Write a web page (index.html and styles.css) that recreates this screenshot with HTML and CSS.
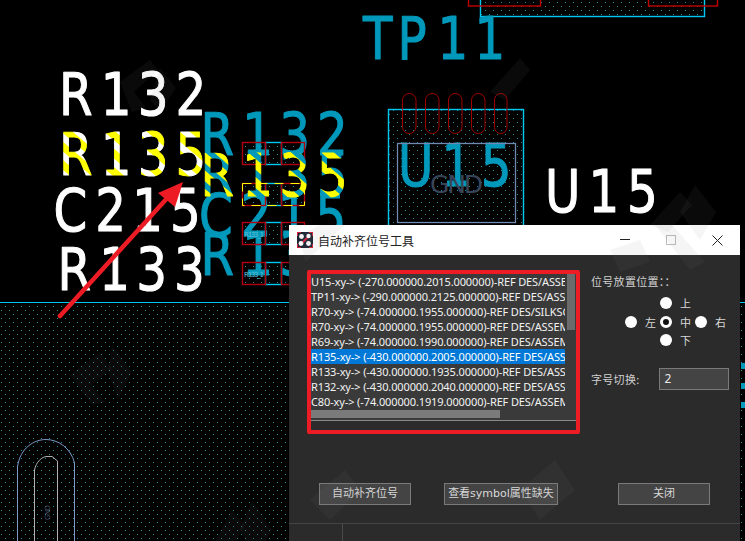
FILE: index.html
```html
<!DOCTYPE html>
<html lang="zh-CN">
<head>
  <meta charset="UTF-8">
  <meta name="viewport" content="width=device-width, initial-scale=1.0">
  <title>自动补齐位号工具</title>
  <link rel="stylesheet" href="styles.css">
</head>
<body>

<div class="desktop">

  <!-- pcb canvas -->
  <svg class="pcb" width="745" height="541" viewBox="0 0 745 541">
    <defs>
      <pattern id="dots" width="8" height="8" patternUnits="userSpaceOnUse">
        <rect x="5" y="2" width="1" height="1" fill="#14909f"/>
        <rect x="1" y="6" width="1" height="1" fill="#14909f"/>
      </pattern>
      <pattern id="dash-white" width="15" height="15" patternUnits="userSpaceOnUse" patternTransform="rotate(35)">
        <rect width="15" height="15" fill="#fff"/>
        <rect width="15" height="8" fill="#ffff00"/>
      </pattern>
      <pattern id="dash-teal" width="15" height="15" patternUnits="userSpaceOnUse" patternTransform="rotate(35)">
        <rect width="15" height="15" fill="#ffff00"/>
        <rect width="15" height="6" fill="#0099bb"/>
      </pattern>
    </defs>

    <!-- copper areas -->
    <rect class="area" x="480.5" y="-10" width="224" height="26.5"/>
    <rect class="pad-red" x="468.5" y="-10" width="72" height="16"/>
    <rect class="pad-red" x="648.5" y="-10" width="69" height="16"/>
    <rect class="area" x="388.5" y="109.5" width="135" height="130"/>
    <rect class="area-fill" x="-1" y="302" width="747" height="245"/>
    <line class="edge" x1="0" y1="302.5" x2="745" y2="302.5"/>

    <!-- teal silk -->
    <text class="silk teal" transform="translate(363 59) scale(.82 1)" x="0 42 91 136">TP11</text>
    <text class="silk teal" transform="translate(200.5 155) scale(.82 1)" x="0 51 96 142">R132</text>
    <text class="silk teal" transform="translate(199 236) scale(.82 1)" x="0 51 96 142">C215</text>
    <text class="silk teal" transform="translate(200.5 275) scale(.82 1)" x="0 51 96 142">R133</text>
    <text class="silk teal" transform="translate(398 186) scale(.82 1)" x="0 53 101">U15</text>
    <text class="silk-small" x="430" y="193" textLength="53">GND</text>

    <!-- U15 pads -->
    <rect class="inner" x="397.5" y="143.5" width="118" height="79"/>
    <rect class="oval" x="402.5" y="93.5" width="13.5" height="40" rx="6.7"/>
    <rect class="oval" x="425.5" y="93.5" width="13.5" height="40" rx="6.7"/>
    <rect class="oval" x="448.5" y="93.5" width="13.5" height="40" rx="6.7"/>
    <rect class="oval" x="471.5" y="93.5" width="13.5" height="40" rx="6.7"/>
    <rect class="oval" x="494.5" y="93.5" width="12.5" height="40" rx="6.2"/>

    <!-- resistor pads -->
    <rect class="area" x="265.5" y="142.5" width="16" height="22"/>
    <rect class="pad-dot" x="242.5" y="142.5" width="23" height="22"/>
    <rect class="pad-dot" x="281.5" y="142.5" width="23" height="22"/>
    <rect class="area" x="265.5" y="183.5" width="16" height="22"/>
    <rect class="pad-dot" x="242.5" y="183.5" width="23" height="22"/>
    <rect class="pad-dot" x="281.5" y="183.5" width="23" height="22"/>
    <rect class="area" x="265.5" y="222.5" width="16" height="22"/>
    <rect class="pad-dot" x="242.5" y="222.5" width="23" height="22"/>
    <rect class="pad-dot" x="281.5" y="222.5" width="23" height="22"/>
    <rect class="area" x="265.5" y="262.5" width="16" height="22"/>
    <rect class="pad-dot" x="242.5" y="262.5" width="23" height="22"/>
    <rect class="pad-dot" x="281.5" y="262.5" width="23" height="22"/>
    <rect class="select-box" x="242.5" y="183.5" width="62" height="22"/>
    <text class="silk-tiny" x="244" y="237" textLength="20">R133_1</text>
    <text class="silk-tiny" x="244" y="277" textLength="20">R133_1</text>

    <!-- selected silk -->
    <text class="silk dash-teal" transform="translate(200.5 196) scale(.82 1)" x="0 51 96 142">R135</text>

    <!-- white silk -->
    <text class="silk white" transform="translate(59 115) scale(.82 1)" x="0 51 96 142">R132</text>
    <text class="silk dash-white" transform="translate(59 175) scale(.82 1)" x="0 51 96 142">R135</text>
    <text class="silk white" transform="translate(53.5 231) scale(.82 1)" x="0 51 96 142">C215</text>
    <text class="silk white" transform="translate(57.5 290) scale(.82 1)" x="0 51 96 142">R133</text>
    <text class="silk white" transform="translate(545 212) scale(.82 1)" x="0 53 100">U15</text>

    <!-- bottom left slot -->
    <path class="slot-out" d="M17.5 545V467C20 448 34 439.5 46 439.5S71 448 74.5 463V545"/>
    <path class="slot-in" d="M34.5 545V470C36 462 42 456.5 47 456.5H52L57.5 461V545"/>
    <text class="silk-tiny grey" transform="translate(50 520) rotate(-90)" textLength="15">GND</text>

    <!-- arrow -->
    <line class="arrow-line" x1="60" y1="316" x2="170" y2="195"/>
    <polygon class="arrow-head" points="183,182 158,193 175,207"/>

    <!-- things peeking out around the window -->
    <rect class="peek" x="741" y="363" width="4" height="6"/>
    <rect class="peek" x="741" y="383" width="4" height="6"/>
    <rect class="peek" x="741" y="402" width="4" height="6"/>
  </svg>

  <!-- tool window -->
  <div class="window">
    <div class="titlebar">
      <svg class="app-icon" width="16" height="16" viewBox="0 0 16 16">
        <rect width="16" height="16" rx="2" fill="#1d2433"/>
        <path d="M0 4V0H4M12 0H16V4M16 12V16H12M4 16H0V12" fill="none" stroke="#d0213d" stroke-width="2"/>
        <line x1="4" y1="12" x2="12" y2="4" stroke="#d0213d" stroke-width="2"/>
        <circle cx="4.5" cy="4.5" r="2.4" fill="#fff"/>
        <circle cx="11.5" cy="4" r="2.2" fill="#fff"/>
        <circle cx="4" cy="11.5" r="2.4" fill="#fff"/>
        <circle cx="11.5" cy="11.5" r="2.4" fill="#fff"/>
      </svg>
      <span class="title-text">自动补齐位号工具</span>
      <div class="win-buttons">
        <span class="win-btn"><i class="win-min"></i></span>
        <span class="win-btn"><i class="win-max"></i></span>
        <span class="win-btn">
          <svg width="11" height="11" viewBox="0 0 11 11"><path d="M.5.5L10.5 10.5M10.5.5L.5 10.5" stroke="#222" fill="none"/></svg>
        </span>
      </div>
    </div>

    <div class="window-body">
      <div class="top-row">
        <div class="list-frame">
          <div class="list-view">
            <div class="list-rows">
              <div class="list-row">U15-xy-&gt; (-270.000000.2015.000000)-REF DES/ASSE</div>
              <div class="list-row">TP11-xy-&gt; (-290.000000.2125.000000)-REF DES/ASSI</div>
              <div class="list-row">R70-xy-&gt; (-74.000000.1955.000000)-REF DES/SILKSC</div>
              <div class="list-row">R70-xy-&gt; (-74.000000.1955.000000)-REF DES/ASSEM</div>
              <div class="list-row">R69-xy-&gt; (-74.000000.1990.000000)-REF DES/ASSEM</div>
              <div class="list-row selected">R135-xy-&gt; (-430.000000.2005.000000)-REF DES/ASS</div>
              <div class="list-row">R133-xy-&gt; (-430.000000.1935.000000)-REF DES/ASS</div>
              <div class="list-row">R132-xy-&gt; (-430.000000.2040.000000)-REF DES/ASS</div>
              <div class="list-row">C80-xy-&gt; (-74.000000.1919.000000)-REF DES/ASSEM</div>
            </div>
            <div class="v-scroll"><div class="v-thumb"></div></div>
          </div>
          <div class="h-scroll"><div class="h-thumb"></div></div>
          <div class="list-foot"></div>
        </div>

        <div class="options">
          <div class="opt-label">位号放置位置：：</div>
          <div class="radio-grid">
            <label class="radio r-top"><i class="dot"></i>上</label>
            <label class="radio r-left"><i class="dot"></i>左</label>
            <label class="radio r-mid"><i class="dot on"></i>中</label>
            <label class="radio r-right"><i class="dot"></i>右</label>
            <label class="radio r-bottom"><i class="dot"></i>下</label>
          </div>
          <div class="size-row">
            <span class="opt-label">字号切换:</span>
            <div class="size-input">2</div>
          </div>
        </div>
      </div>

      <div class="button-row">
        <button class="btn btn-auto">自动补齐位号</button>
        <button class="btn btn-symbol">查看symbol属性缺失</button>
        <button class="btn btn-close">关闭</button>
      </div>

      <div class="statusbar"><div class="status-cell"></div></div>
    </div>
  </div>

  <!-- watermark lies over everything -->
  <svg class="marks" width="745" height="541" viewBox="0 0 745 541">
    <path d="M120 82L150 60L158 70L134 92L146 108L132 112Z"/>
    <path d="M160 68L176 88L160 112L150 100Z"/>
    <path d="M70 375L100 352L112 368L92 385L105 402L92 405Z"/>
    <path d="M112 345L132 372L118 400L108 372Z"/>
    <path d="M205 560L232 510L245 525L225 560Z"/>
    <path d="M252 500L272 530L255 560L240 530Z"/>
    <path d="M650 225L680 192L692 205L668 232Z"/>
    <path d="M695 185L716 212L700 240L680 212Z"/>
    <path d="M490 92L520 58L530 70L505 100Z"/>
    <path d="M300 235L320 225H345L305 262Z"/>
    <path d="M655 225L690 270L705 262L672 225Z"/>
    <path d="M610 250L640 240L650 262L620 272Z"/>
    <path d="M310 500L345 470L360 490L330 520Z"/>
    <path d="M520 490L555 460L575 490L540 520Z"/>
  </svg>

</div>

</body>
</html>
```

FILE: styles.css
```css
html, body {
  margin: 0;
  padding: 0;
  background: #000;
}

.desktop {
  position: relative;
  width: 745px;
  height: 541px;
  overflow: hidden;
  background: #000;
}

.pcb,
.marks {
  position: absolute;
  left: 0;
  top: 0;
}

.marks {
  fill: rgba(128, 128, 128, 0.08);
  pointer-events: none;
}

/* pcb layers */
.area {
  fill: url(#dots);
  stroke: #00c8f0;
  stroke-width: 1.4;
}
.area-fill {
  fill: url(#dots);
}
.edge {
  stroke: #00c8f0;
  stroke-width: 1.2;
}
.pad-red {
  fill: none;
  stroke: #c00000;
  stroke-width: 1.4;
}
.pad-dot {
  fill: url(#dots);
  stroke: #b00010;
  stroke-width: 1.4;
}
.select-box {
  fill: none;
  stroke: #ffff00;
  stroke-width: 1;
  stroke-dasharray: 9 7;
}
.inner {
  fill: none;
  stroke: #7189b0;
  stroke-width: 1.3;
}
.oval {
  fill: none;
  stroke: #a00000;
  stroke-width: 1;
}
.slot-out {
  fill: none;
  stroke: #7f9ac8;
  stroke-width: 1;
}
.slot-in {
  fill: none;
  stroke: #b0b0b0;
  stroke-width: 1;
}

.silk {
  font-family: "DejaVu Sans", sans-serif;
  font-size: 59px;
  stroke-width: 1.1;
  stroke-linejoin: round;
}
.white {
  fill: #fff;
  stroke: #fff;
}
.teal {
  fill: #0099bb;
  stroke: #0099bb;
}
.dash-white {
  fill: url(#dash-white);
  stroke: url(#dash-white);
}
.dash-teal {
  fill: url(#dash-teal);
  stroke: url(#dash-teal);
}
.silk-small {
  font-family: "DejaVu Sans", sans-serif;
  font-size: 25px;
  fill: #3a4458;
}
.silk-tiny {
  font-family: "DejaVu Sans", sans-serif;
  font-size: 7px;
  fill: #5fc0d8;
}
.silk-tiny.grey {
  fill: #4a5468;
}

.arrow-line {
  stroke: #ed1c24;
  stroke-width: 4.5;
  stroke-linecap: round;
}
.arrow-head {
  fill: #ed1c24;
}
.peek {
  fill: #0099bb;
}

/* tool window */
.window {
  position: absolute;
  left: 289px;
  top: 225px;
  width: 451px;
  height: 316px;
  display: flex;
  flex-direction: column;
  background: #2b2b2b;
  font-family: "Noto Sans", "Noto Sans CJK SC", sans-serif;
  color: #d8d8d8;
}

.titlebar {
  flex: 0 0 30px;
  display: flex;
  align-items: center;
  background: #fff;
  padding-left: 8px;
}
.app-icon {
  flex: none;
  margin-top: -1px;
}
.title-text {
  margin-left: 5px;
  font-family: "Noto Sans CJK SC", sans-serif;
  font-size: 12px;
  color: #222;
}
.win-buttons {
  margin-left: auto;
  display: flex;
}
.win-btn {
  width: 46px;
  height: 30px;
  display: flex;
  align-items: center;
  justify-content: center;
}
.win-min {
  width: 10px;
  height: 1px;
  background: #222;
  margin-top: -2px;
}
.win-max {
  width: 8px;
  height: 8px;
  border: 1px solid #bbb;
}

.window-body {
  flex: 1;
  display: flex;
  flex-direction: column;
  min-height: 0;
}

.top-row {
  display: flex;
  padding: 15px 11px 0 18px;
  gap: 11px;
}

.list-frame {
  flex: none;
  width: 265px;
  height: 156px;
  border: 4px solid #ed1c24;
  border-radius: 2px;
  background: #3a3a3a;
  display: flex;
  flex-direction: column;
  overflow: hidden;
}
.list-view {
  flex: 0 0 141px;
  display: flex;
  box-sizing: border-box;
}
.list-rows {
  width: 254px;
  overflow: hidden;
}
.list-row {
  height: 15px;
  line-height: 15px;
  font-size: 11px;
  letter-spacing: -0.12px;
  white-space: nowrap;
  overflow: hidden;
  color: #f2f2f2;
}
.list-row.selected {
  background: #0078d7;
  color: #fff;
}
.v-scroll {
  width: 8px;
  margin-left: 2px;
}
.v-thumb {
  height: 56px;
  background: #6b6b6b;
}
.h-scroll {
  height: 8px;
  margin-top: -5px;
}
.h-thumb {
  width: 189px;
  height: 8px;
  background: #7a7a7a;
}
.list-foot {
  flex: 1;
  margin-top: 2px;
  border-top: 1px solid #8a8a8a;
  background: #2b2b2b;
}

.options {
  flex: 1;
  font-size: 11px;
}
.opt-label {
  font-family: "Noto Sans CJK SC", sans-serif;
  font-size: 11px;
  letter-spacing: 0.3px;
  color: #d0d0d0;
  white-space: nowrap;
}
.options > .opt-label {
  line-height: 18px;
  margin-top: 2px;
}
.radio-grid {
  display: grid;
  grid-template-columns: repeat(3, 35px);
  grid-auto-rows: 18.5px;
  margin: 4px 0 0 34px;
}
.radio {
  display: flex;
  align-items: center;
  gap: 8px;
  font-family: "Noto Sans CJK SC", sans-serif;
  font-size: 11px;
  color: #d8d8d8;
  white-space: nowrap;
}
.r-top { grid-column: 2; grid-row: 1; }
.r-left { grid-column: 1; grid-row: 2; }
.r-mid { grid-column: 2; grid-row: 2; }
.r-right { grid-column: 3; grid-row: 2; }
.r-bottom { grid-column: 2; grid-row: 3; }
.dot {
  flex: none;
  width: 12px;
  height: 12px;
  border-radius: 50%;
  background: #fff;
  box-sizing: border-box;
}
.dot.on {
  background: #111;
  border: 3px solid #fff;
}
.size-row {
  display: flex;
  align-items: center;
  gap: 19px;
  margin-top: 18px;
}
.size-input {
  flex: none;
  width: 70px;
  height: 22px;
  box-sizing: border-box;
  border: 1px solid #7a7a7a;
  background: #444;
  padding-left: 5px;
  font-size: 12px;
  line-height: 20px;
  color: #e8e8e8;
}

.button-row {
  display: flex;
  padding: 49px 0 0 30px;
  height: 22px;
}
.btn {
  height: 22px;
  box-sizing: border-box;
  border: 1px solid #7a7a7a;
  background: #444;
  color: #d8d8d8;
  font-family: "DejaVu Sans", "Noto Sans CJK SC", sans-serif;
  font-size: 11px;
  padding: 0;
  line-height: 18px;
}
.btn-auto {
  width: 92px;
}
.btn-symbol {
  width: 114px;
  margin-left: 33px;
}
.btn-close {
  width: 92px;
  margin-left: 60px;
}

.statusbar {
  margin-top: auto;
  height: 18px;
  border-top: 1px solid #444;
  box-sizing: border-box;
}
.status-cell {
  width: 53px;
  height: 100%;
  border-right: 1px solid #4a4a4a;
}
```
